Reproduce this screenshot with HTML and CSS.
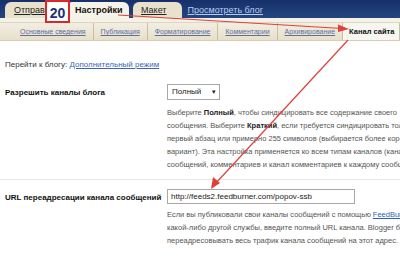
FILE: index.html
```html
<!DOCTYPE html>
<html lang="ru">
<head>
	<meta charset="UTF-8">
	<title>Настройки - Канал сайта</title>
	<link rel="stylesheet" href="styles.css">
</head>
<body>
	<div class="page">
		<div class="topbar">
			<span class="tab first">Отправка</span>
			<span class="tab active">Настройки</span>
			<span class="tab third">Макет</span>
			<a class="view" href="#">Просмотреть блог</a>
		</div>
		<div class="subbar">
			<ul class="subtabs">
				<li><a href="#">Основные сведения</a></li>
				<li><a href="#">Публикация</a></li>
				<li><a href="#">Форматирование</a></li>
				<li><a href="#">Комментарии</a></li>
				<li><a href="#">Архивирование</a></li>
				<li class="current">Канал сайта</li>
			</ul>
		</div>
		<div class="content">
			<p class="goto">Перейти к блогу: <a href="#">Дополнительный режим</a></p>
			<div class="row">
				<div class="label">Разрешить каналы блога</div>
				<div class="field">
					<div class="select">Полный<span class="caret">&#9662;</span></div>
					<p class="desc">Выберите <b>Полный</b>, чтобы синдицировать все содержание своего<br>
					сообщения. Выберите <b>Краткий</b>, если требуется синдицировать только<br>
					первый абзац или примерно 255 символов (выбирается более короткий<br>
					вариант). Эта настройка применяется ко всем типам каналов (каналы<br>
					сообщений, комментариев и канал комментариев к каждому сообщению).</p>
				</div>
			</div>
			<div class="row sep">
				<div class="label">URL переадресации канала сообщений</div>
				<div class="field">
					<div class="input">http://feeds2.feedburner.com/popov-ssb</div>
					<p class="desc">Если вы публиковали свои каналы сообщений с помощью <a href="#">FeedBurner</a> или<br>
					какой-либо другой службы, введите полный URL канала. Blogger будет<br>
					переадресовывать весь трафик канала сообщений на этот адрес.</p>
				</div>
			</div>
		</div>

		<div class="badge">20</div>
		<svg class="arrows" width="400" height="256" viewBox="0 0 400 256">
			<g stroke="#e0403a" stroke-width="1.2" fill="#e0403a">
				<line x1="118" y1="15" x2="342" y2="28.5"/>
				<polygon points="349,29 338,24.5 338,32" stroke="none"/>
				<line x1="348" y1="40" x2="216" y2="183"/>
				<polygon points="211,189 213,177 220,183" stroke="none"/>
			</g>
		</svg>
	</div>
</body>
</html>
```
FILE: styles.css
```css
*{
	margin: 0;
	padding: 0;
}
body{
	width: 400px;
	height: 256px;
	overflow: hidden;
	background: #fff;
	font-family: "Liberation Sans", Arial, sans-serif;
	font-size: 8px;
	color: #333;
}
.page{
	position: relative;
	width: 400px;
	height: 256px;
	overflow: hidden;
}
.topbar{
	height: 18px;
	background: linear-gradient(#17306a, #23457f);
	display: flex;
	align-items: flex-end;
	padding-left: 5px;
	white-space: nowrap;
}
.tab{
	height: 16px;
	line-height: 16px;
	padding: 0 9px;
	margin-right: 4px;
	background: #e8e2cd;
	border-radius: 6px 6px 0 0;
	color: #222;
	font-size: 9px;
	text-decoration: underline;
}
.tab.first{
	width: 39px;
}
.tab.active{
	background: #f6f3ea;
	font-weight: bold;
	text-decoration: none;
	color: #111;
	width: 45px;
	margin-right: 4px;
}
.tab.third{
	padding: 0 16px 0 8px;
}
.view{
	height: 16px;
	line-height: 16px;
	margin-left: 1px;
	color: #b9cdf0;
	font-size: 9px;
}
.subbar{
	background: #f4f1e7;
	padding-top: 4px;
}
.subtabs{
	list-style: none;
	display: flex;
	height: 17px;
	border-top: 1px solid #ddd6c0;
	border-bottom: 1px solid #d6ceb5;
	background: linear-gradient(#f2eee2, #e6dfca);
	padding-left: 13px;
	white-space: nowrap;
}
.subtabs li{
	line-height: 17px;
	padding: 0 7px;
	border-right: 1px solid #c9bfa3;
	font-size: 7px;
}
.subtabs a{
	color: #5d6f9c;
}
.subtabs li.current{
	background: #f8f6f0;
	color: #111;
	font-weight: bold;
	padding: 0 5px 0 6px;
	font-size: 7.5px;
}
.content{
	padding: 19px 0 0 5px;
}
.goto a{
	color: #3966b8;
}
.row{
	display: flex;
	padding-top: 15px;
}
.row.sep{
	margin-top: 8px;
	margin-left: -5px;
	padding-left: 5px;
	padding-top: 9px;
	border-top: 1px solid #e6e6e6;
}
.label{
	width: 162px;
	flex-shrink: 0;
	font-weight: bold;
	color: #111;
	padding-top: 4px;
}
.field{
	white-space: nowrap;
}
.select{
	position: relative;
	width: 47px;
	height: 14px;
	line-height: 14px;
	padding-left: 4px;
	border: 1px solid #a8a8a8;
	color: #222;
}
.caret{
	position: absolute;
	right: 3px;
	top: 0;
	font-size: 7px;
}
.input{
	width: 183px;
	height: 13px;
	line-height: 13px;
	padding-left: 3px;
	border: 1px solid #a8a8a8;
	color: #222;
}
.desc{
	margin-top: 6px;
	line-height: 13px;
	color: #555;
	font-size: 7.5px;
}
.row.sep .desc{
	margin-top: 4px;
}
.desc b{
	color: #222;
}
.desc a{
	color: #2f5fb3;
}
.badge{
	position: absolute;
	left: 45px;
	top: 0;
	width: 21px;
	height: 19px;
	border: 2px solid #d8282c;
	background: #fff;
	color: #1b2f7a;
	font-weight: bold;
	font-size: 14px;
	text-align: center;
	line-height: 22px;
}
.arrows{
	position: absolute;
	left: 0;
	top: 0;
}
```
